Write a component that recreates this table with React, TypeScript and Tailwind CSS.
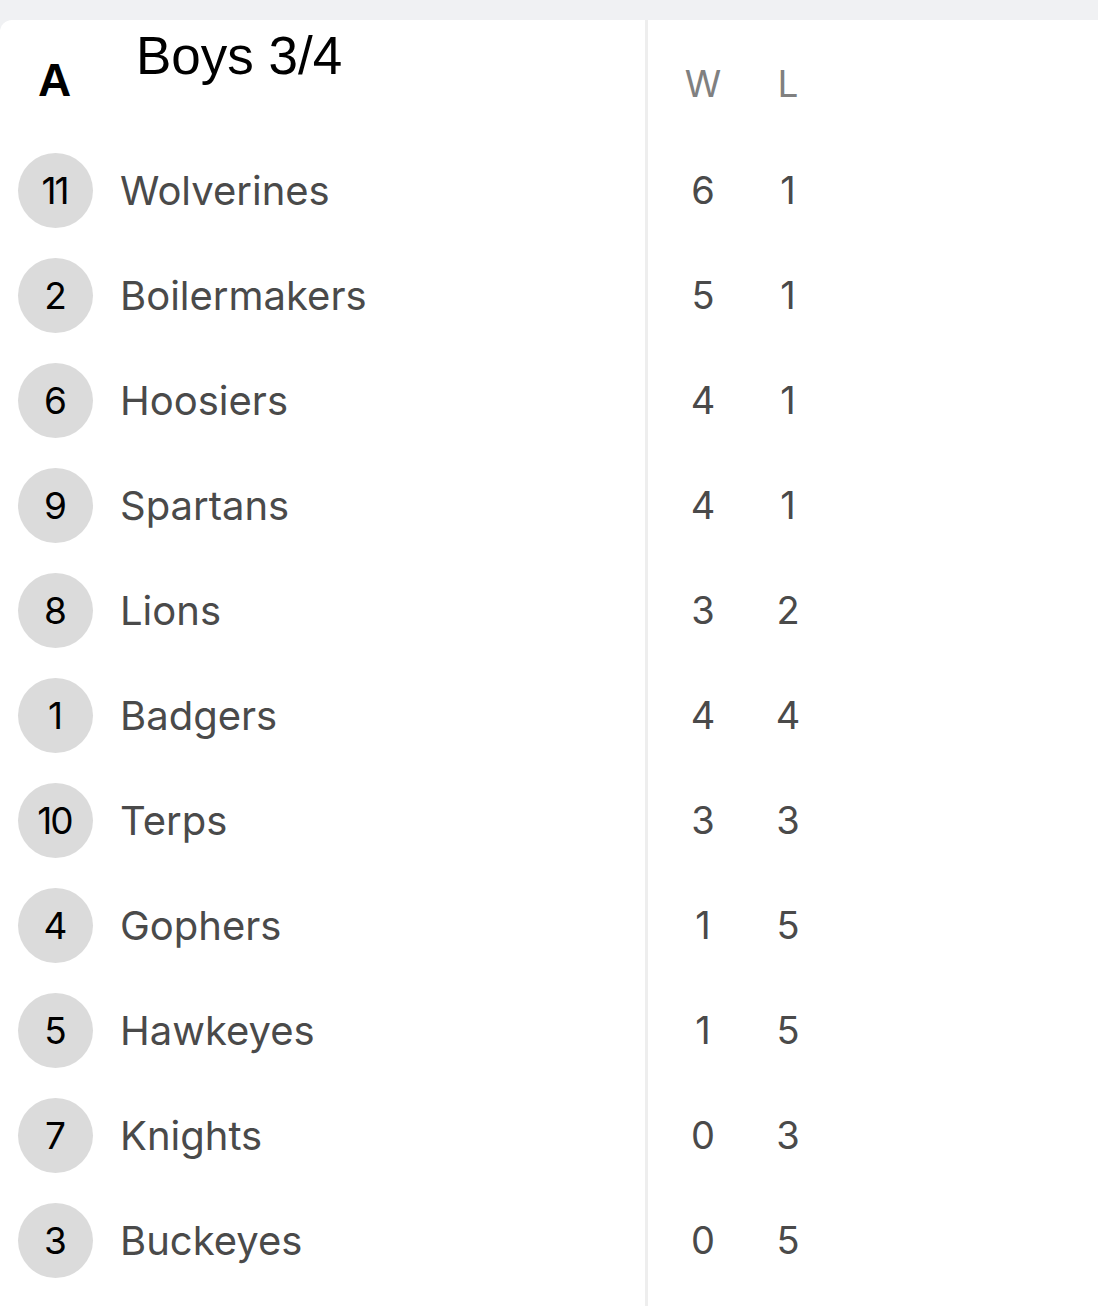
const teams = [
  { seed: 11, name: "Wolverines", w: 6, l: 1 },
  { seed: 2, name: "Boilermakers", w: 5, l: 1 },
  { seed: 6, name: "Hoosiers", w: 4, l: 1 },
  { seed: 9, name: "Spartans", w: 4, l: 1 },
  { seed: 8, name: "Lions", w: 3, l: 2 },
  { seed: 1, name: "Badgers", w: 4, l: 4 },
  { seed: 10, name: "Terps", w: 3, l: 3 },
  { seed: 4, name: "Gophers", w: 1, l: 5 },
  { seed: 5, name: "Hawkeyes", w: 1, l: 5 },
  { seed: 7, name: "Knights", w: 0, l: 3 },
  { seed: 3, name: "Buckeyes", w: 0, l: 5 },
];

export default function App() {
  return (
    <div className="min-h-[1306px] w-[1098px] bg-[#f0f1f3] pt-[20px]">
      <div className="flex min-h-[1286px] rounded-tl-[12px] bg-white font-['Inter',sans-serif]">
        {/* Teams column */}
        <div className="w-[648px] border-r-[3px] border-[#eeeeee]">
          <div className="flex h-[118px] items-start pl-[38px] font-['Liberation_Sans',Arial,sans-serif] text-black">
            <div className="mt-[37px] w-[98px] text-[46px] font-bold leading-none">A</div>
            <div className="mt-[9px] text-[53px] leading-none">Boys 3/4</div>
          </div>
          {teams.map((t) => (
            <div key={t.name} className="flex h-[105px] items-center pl-[18px]">
              <div className="flex h-[75px] w-[75px] items-center justify-center rounded-full bg-[#dbdbdb] pr-[2px] text-[37px] tracking-[-2px] text-black">
                {t.seed}
              </div>
              <div className="ml-[27px] text-[40px] text-[#4a4a4a]">{t.name}</div>
            </div>
          ))}
        </div>

        {/* Record column */}
        <div className="flex-1">
          <div className="flex h-[118px] items-center gap-[25px] pl-[25px] pt-[10px] text-[37px] text-[#808080]">
            <div className="w-[60px] text-center">W</div>
            <div className="w-[60px] text-center">L</div>
          </div>
          {teams.map((t) => (
            <div key={t.name} className="flex h-[105px] items-center gap-[25px] pl-[25px] text-[38px] text-[#4a4a4a]">
              <div className="w-[60px] text-center">{t.w}</div>
              <div className="w-[60px] text-center">{t.l}</div>
            </div>
          ))}
        </div>
      </div>
    </div>
  );
}
